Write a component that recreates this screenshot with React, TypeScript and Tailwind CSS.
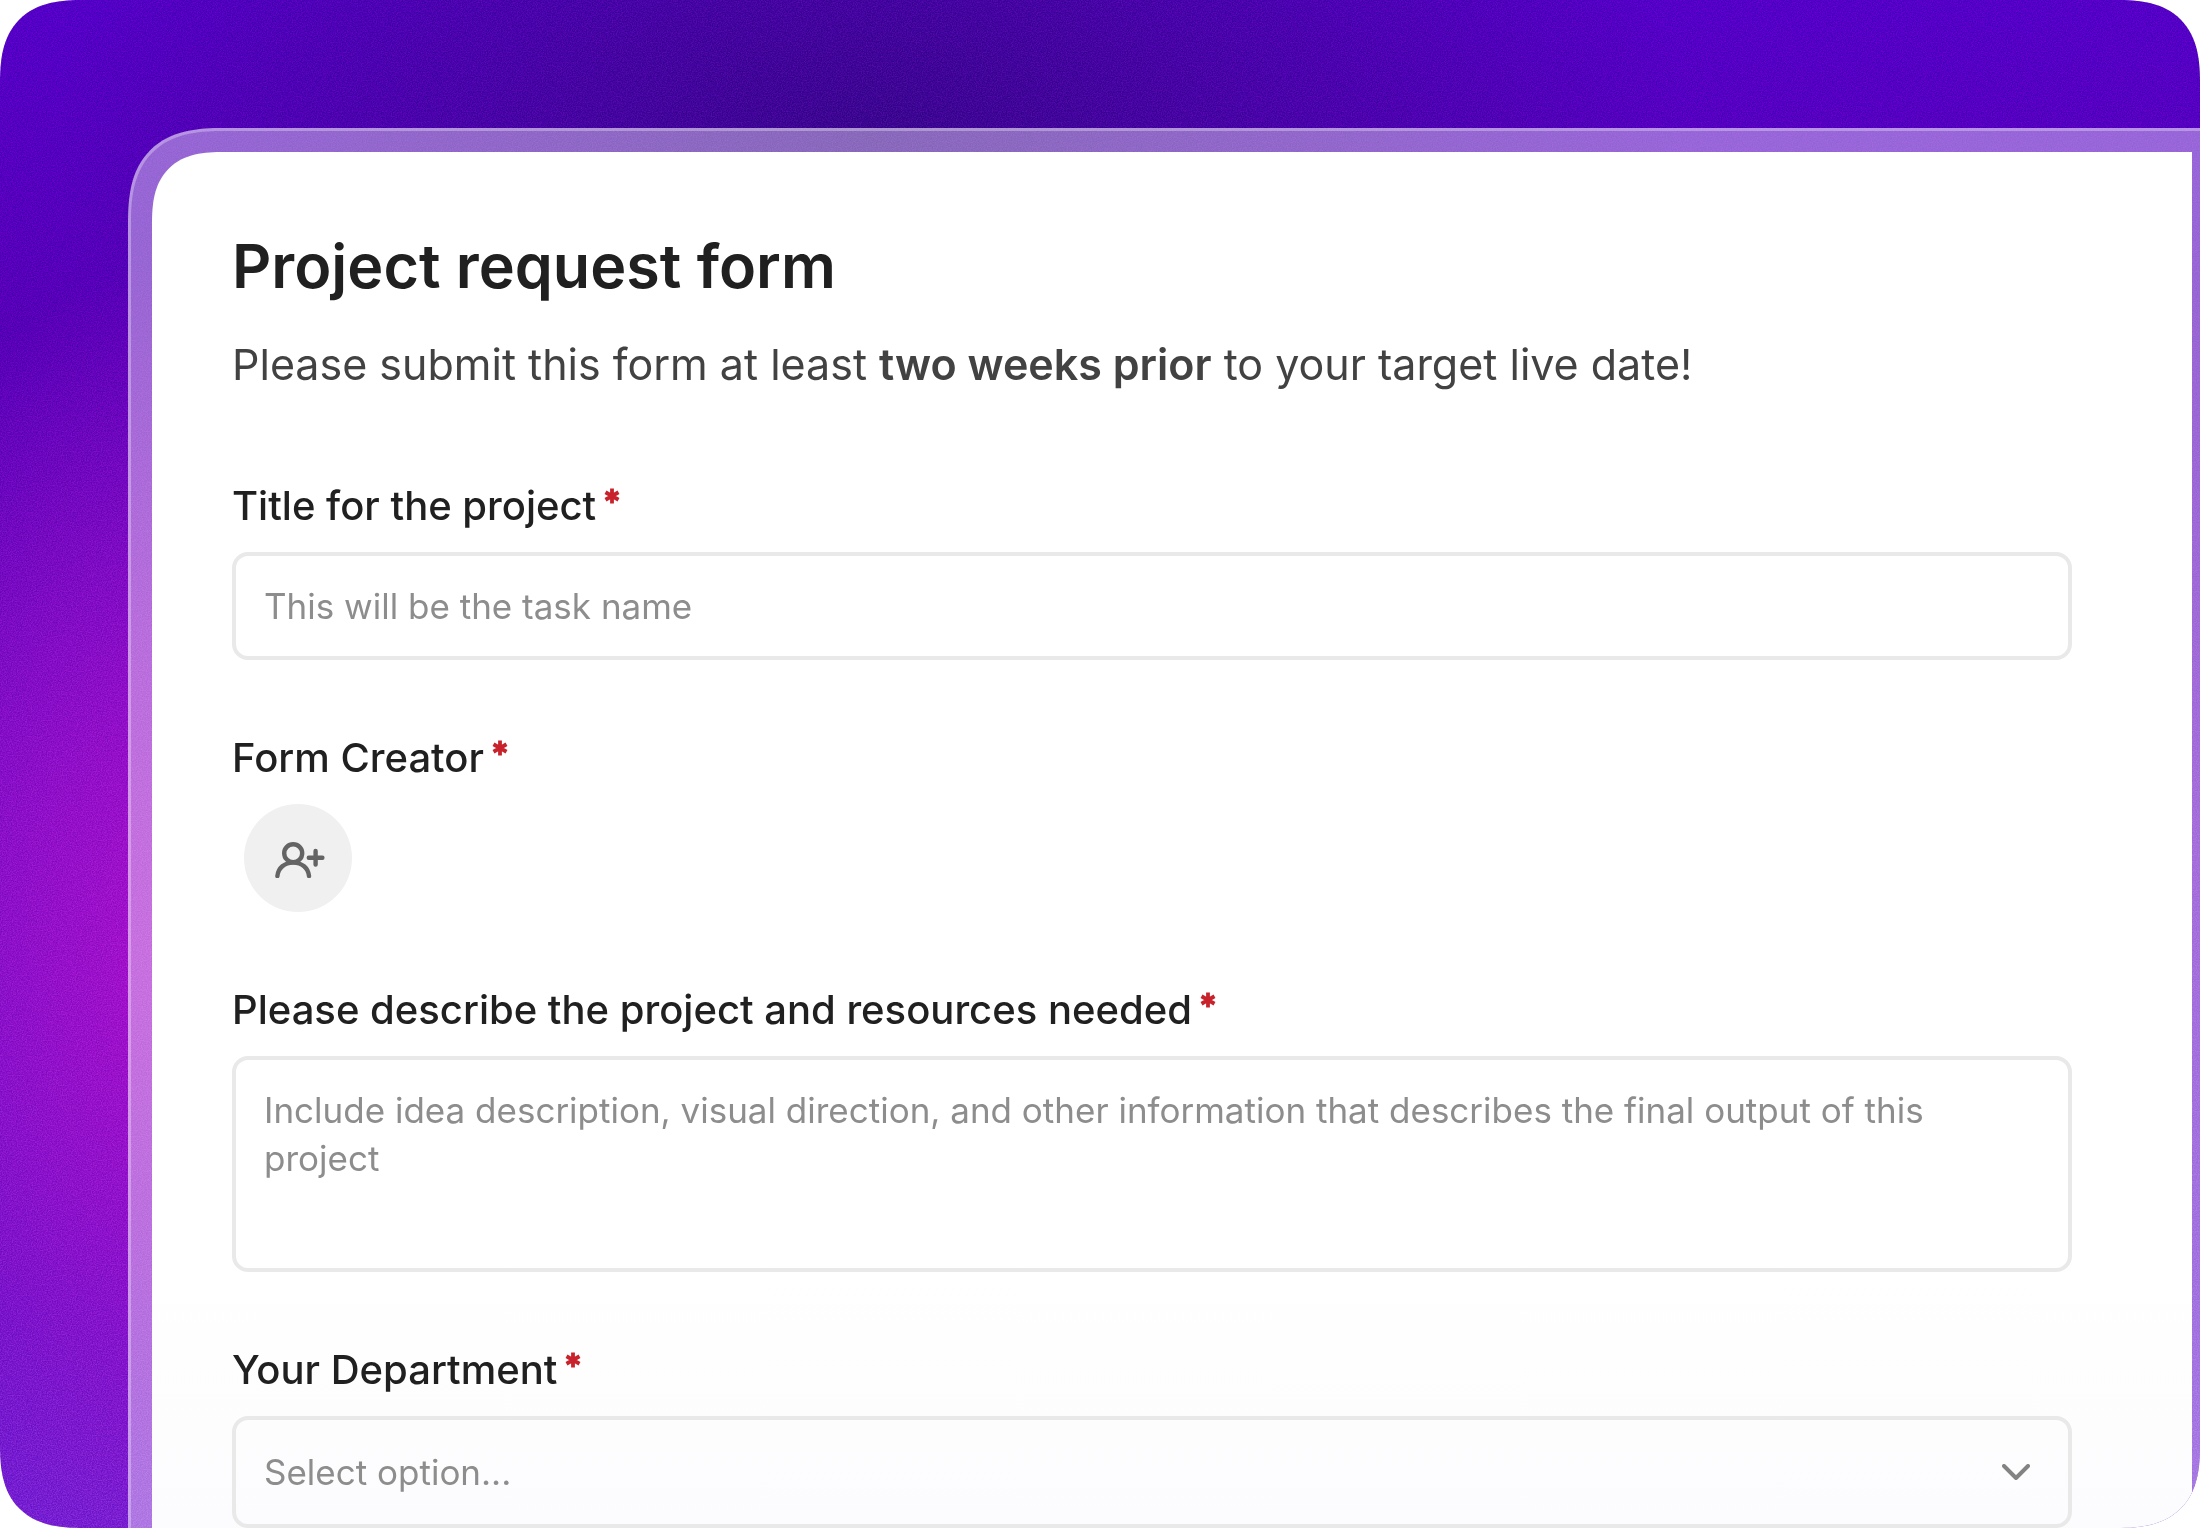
import React from 'react';

interface FieldLabelProps {
  htmlFor: string;
  children: React.ReactNode;
}

const RequiredMark: React.FC = () => (
  <svg viewBox="0 0 16 16" className="w-4 h-4 mt-1.5 shrink-0 text-[#c8232c]" aria-hidden="true">
    <path d="M8 0.5v15M1.5 4.25l13 7.5M14.5 4.25l-13 7.5" stroke="currentColor" strokeWidth="3.8" />
  </svg>
);

const FieldLabel: React.FC<FieldLabelProps> = ({ htmlFor, children }) => (
  <label htmlFor={htmlFor} className="flex items-start gap-2 text-[40px] leading-[48px] font-medium text-[#202020]">
    <span>{children}</span>
    <RequiredMark />
  </label>
);

const fieldClass =
  'block w-full rounded-2xl border-4 border-[#e9e9e9] bg-transparent px-7 text-[35px] leading-[48px] outline-none placeholder:text-[#8d8d8d] placeholder:opacity-100';

const Grain: React.FC = () => (
  <svg className="absolute inset-0 w-full h-full opacity-35 mix-blend-soft-light pointer-events-none" aria-hidden="true">
    <filter id="grain" x="0" y="0" width="100%" height="100%" colorInterpolationFilters="sRGB">
      <feTurbulence type="fractalNoise" baseFrequency="0.8" numOctaves="2" stitchTiles="stitch" />
      <feColorMatrix values="2 0 0 0 -0.5  2 0 0 0 -0.5  2 0 0 0 -0.5  0 0 0 0 1" />
    </filter>
    <rect width="100%" height="100%" filter="url(#grain)" />
  </svg>
);

export default function App() {
  return (
    <main className="relative isolate min-h-screen overflow-hidden rounded-[84px] [corner-shape:superellipse(1.4)] pt-32 pl-32 font-['Inter','Liberation_Sans',sans-serif] bg-[radial-gradient(ellipse_820px_460px_at_870px_140px,#3a0590_0%,#400598b0_40%,#4a04a800_100%),radial-gradient(ellipse_360px_700px_at_170px_960px,#a810cc_0%,#a410cca0_45%,#a010cc00_100%),linear-gradient(180deg,#5400c8_0%,#5600b8_22%,#6a0cc4_55%,#6414cc_85%,#7020d4_100%)]">
      <Grain />
      <div className="relative rounded-tl-[96px] [corner-shape:superellipse(1.4)] border-t-[3px] border-l-[3px] border-white/30 bg-white/40 pt-[21px] pl-[21px] pr-2">
        <form
          className="flex flex-col gap-[74px] rounded-tl-[72px] [corner-shape:superellipse(1.4)] bg-linear-to-b from-white from-80% to-[#fcfcfe] pt-20 pl-20 pr-[120px]"
          onSubmit={(e) => e.preventDefault()}
        >
          <header className="flex flex-col gap-9 pb-4">
            <h1 className="text-[61px] leading-[68px] font-semibold text-[#202020]">Project request form</h1>
            <p className="text-[43px] leading-[56px] text-[#424242]">
              Please submit this form at least <strong className="font-semibold">two weeks prior</strong> to your target
              live date!
            </p>
          </header>

          <div className="flex flex-col gap-[22px]">
            <FieldLabel htmlFor="title">Title for the project</FieldLabel>
            <input id="title" type="text" placeholder="This will be the task name" className={`${fieldClass} h-27`} />
          </div>

          <div className="flex flex-col gap-[22px]">
            <FieldLabel htmlFor="creator">Form Creator</FieldLabel>
            <button
              id="creator"
              type="button"
              className="ml-3 flex items-center justify-center w-27 h-27 rounded-full bg-[#f0f0f0] text-[#646464]"
            >
              <svg viewBox="-4 -4 54 40" className="w-[54px] h-10" fill="none" stroke="currentColor" strokeWidth="4.4" strokeLinecap="round">
                <circle cx="18.2" cy="11.2" r="9" />
                <path d="M2.4 34C3.2 26 9.5 20.6 18.2 20.6S33.2 26 34 34M33.8 15.7h13.6M40.6 8.9v13.6" />
              </svg>
            </button>
          </div>

          <div className="flex flex-col gap-[22px]">
            <FieldLabel htmlFor="description">Please describe the project and resources needed</FieldLabel>
            <textarea
              id="description"
              placeholder="Include idea description, visual direction, and other information that describes the final output of this project"
              className={`${fieldClass} h-54 resize-none py-[26px]`}
            />
          </div>

          <div className="flex flex-col gap-[22px]">
            <FieldLabel htmlFor="department">Your Department</FieldLabel>
            <div className="relative">
              <select id="department" defaultValue="" className={`${fieldClass} h-28 appearance-none text-[#8d8d8d]`}>
                <option value="">Select option...</option>
              </select>
              <svg
                viewBox="0 0 28 16"
                className="absolute right-[42px] top-1/2 w-7 h-4 -translate-y-1/2 pointer-events-none text-[#838383]"
                fill="none"
                stroke="currentColor"
                strokeWidth="4"
                strokeLinecap="round"
                strokeLinejoin="round"
                aria-hidden="true"
              >
                <path d="M2 2l12 12L26 2" />
              </svg>
            </div>
          </div>
        </form>
      </div>
    </main>
  );
}
